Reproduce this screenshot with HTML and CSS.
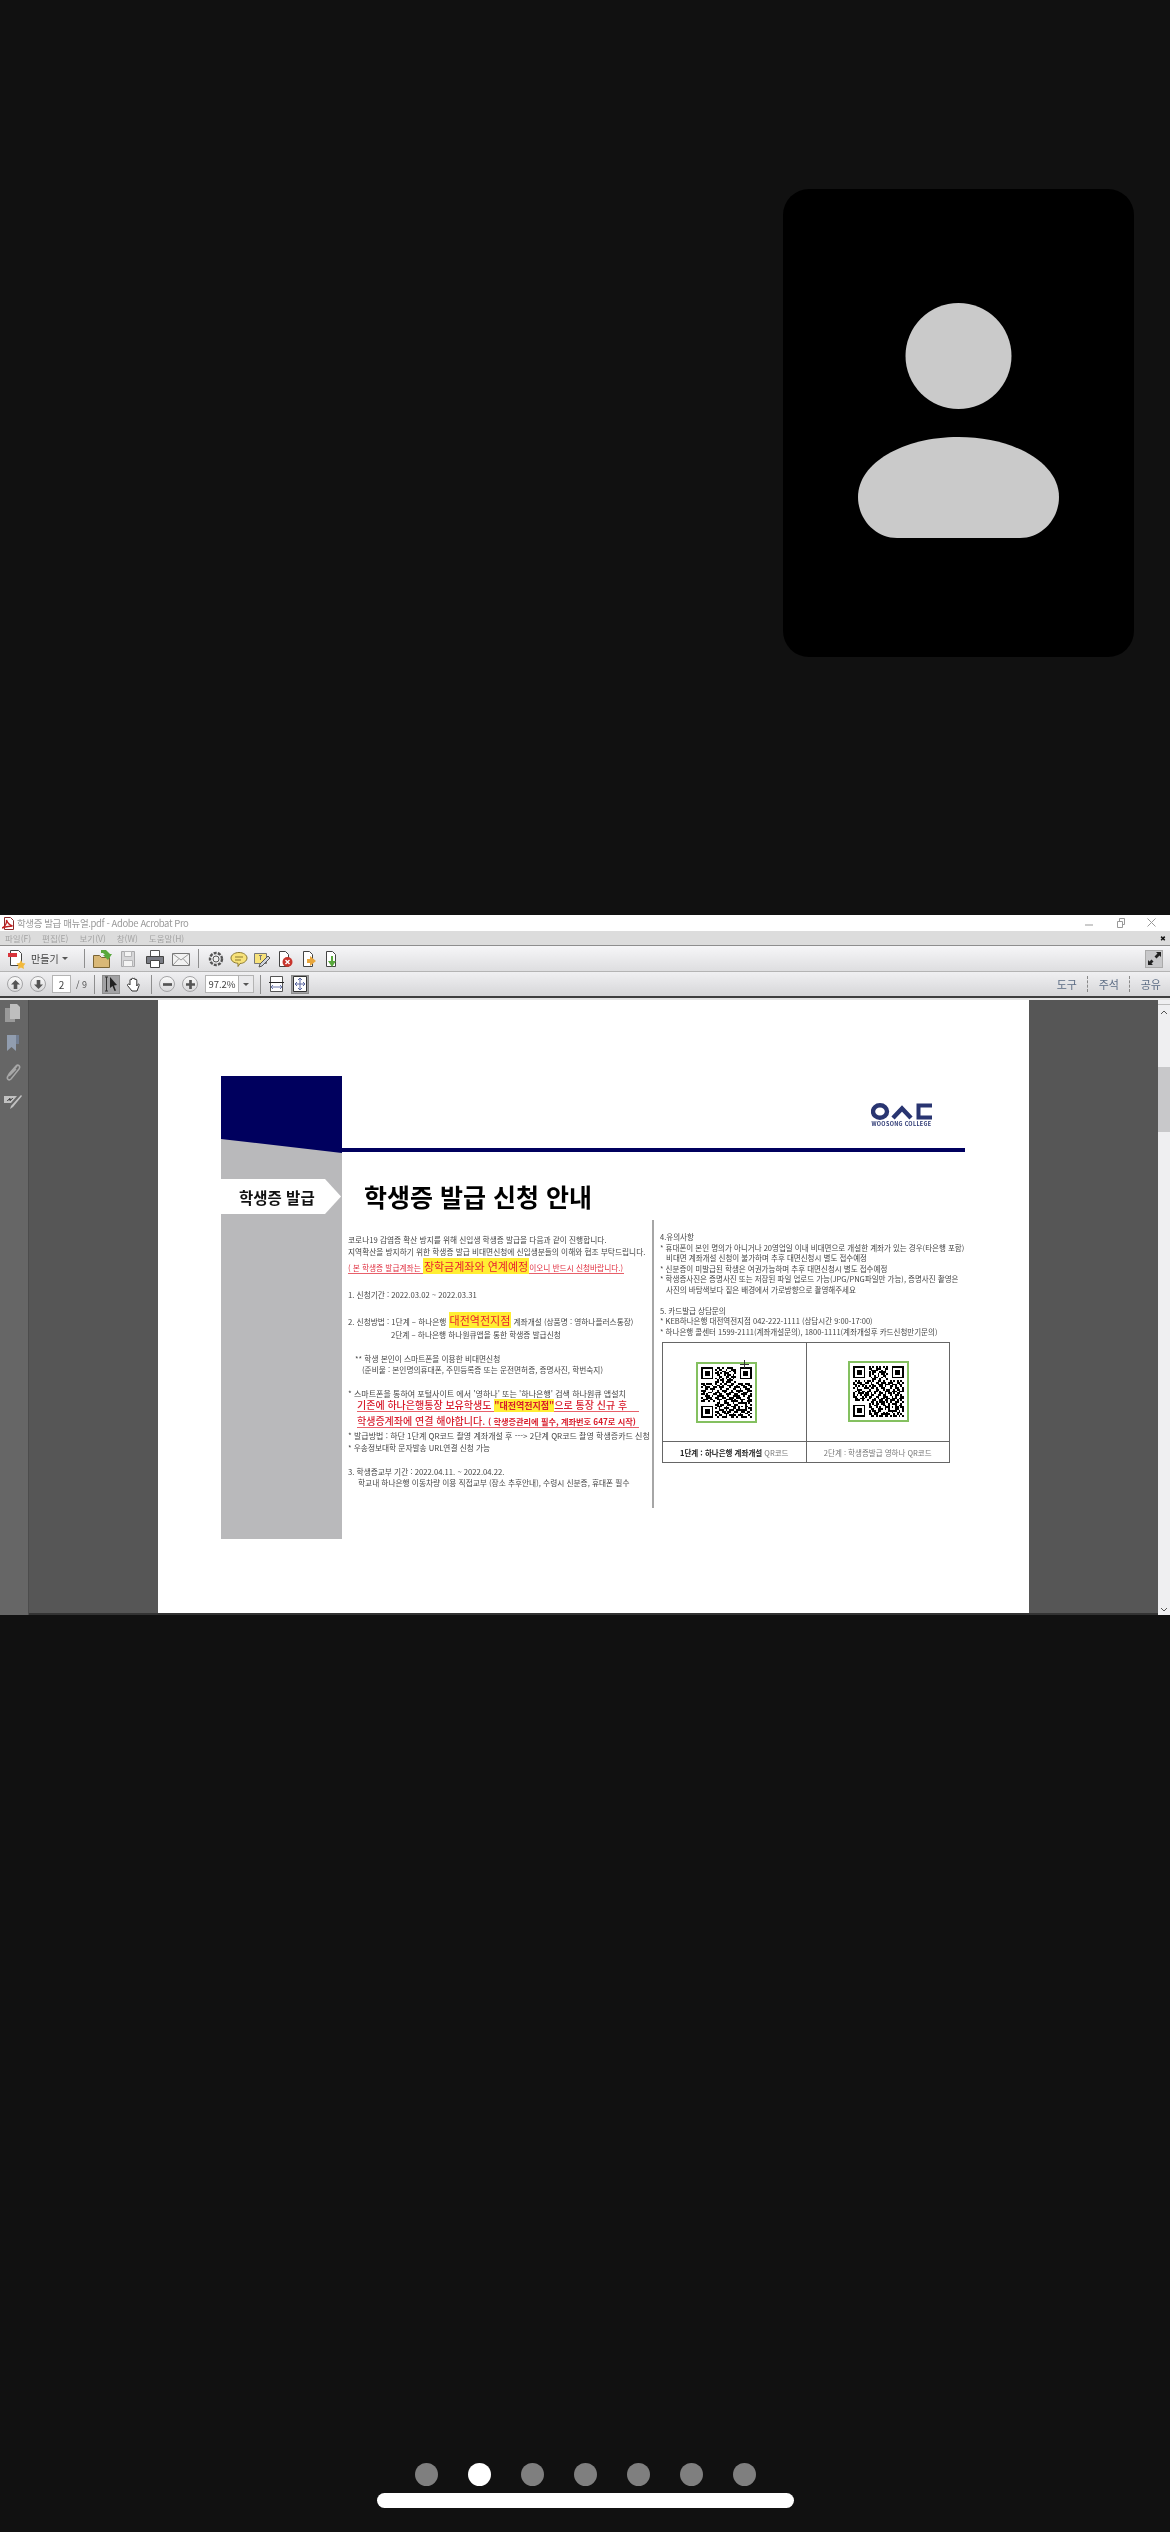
FILE: index.html
```html
<!DOCTYPE html>
<html lang="ko">
<head>
  <meta charset="UTF-8">
  <meta name="viewport" content="width=device-width, initial-scale=1.0">
  <title>학생증 발급 매뉴얼</title>
  <link rel="stylesheet" href="styles.css">
</head>
<body>
  <svg class="defs" width="0" height="0">
    <symbol id="qr-finders" viewBox="0 0 29 29">
      <path fill-rule="evenodd" d="M0 0h7v7H0zM1 1v5h5V1zM2 2h3v3H2zM22 0h7v7h-7zM23 1v5h5V1zM24 2h3v3h-3zM0 22h7v7H0zM1 23v5h5v-5zM2 24h3v3H2z"/>
    </symbol>
    <path id="qr-data" fill="none" stroke="#000" d="M9 .5h2M12 .5h1M15 .5h3M8 1.5h1M10 1.5h2M14 1.5h1M17 1.5h3M9 2.5h1M12 2.5h2M16 2.5h1M18 2.5h2M8 3.5h2M11 3.5h1M13 3.5h3M19 3.5h1M9 4.5h2M13 4.5h1M15 4.5h2M18 4.5h1M10 5.5h2M14 5.5h2M17 5.5h3M8 6.5h1M10 6.5h1M12 6.5h1M14 6.5h1M16 6.5h1M18 6.5h1M9 7.5h1M11 7.5h2M15 7.5h3M8 8.5h2M12 8.5h1M14 8.5h3M19 8.5h1M0 9.5h2M3 9.5h3M8 9.5h1M11 9.5h1M13 9.5h2M17 9.5h2M21 9.5h3M25 9.5h3M1 10.5h2M6 10.5h1M9 10.5h2M12 10.5h1M15 10.5h3M20 10.5h1M23 10.5h2M27 10.5h2M0 11.5h1M2 11.5h3M7 11.5h2M10 11.5h3M16 11.5h1M19 11.5h3M24 11.5h2M28 11.5h1M2 12.5h2M5 12.5h3M11 12.5h1M14 12.5h2M18 12.5h2M22 12.5h1M25 12.5h3M0 13.5h3M6 13.5h1M9 13.5h1M12 13.5h3M17 13.5h1M20 13.5h4M26 13.5h3M1 14.5h1M4 14.5h2M8 14.5h3M13 14.5h1M16 14.5h3M21 14.5h1M24 14.5h3M0 15.5h2M3 15.5h1M7 15.5h2M10 15.5h2M14 15.5h3M19 15.5h2M23 15.5h3M28 15.5h1M2 16.5h3M6 16.5h1M9 16.5h4M15 16.5h1M18 16.5h4M24 16.5h1M27 16.5h2M0 17.5h1M3 17.5h3M8 17.5h2M12 17.5h2M16 17.5h3M20 17.5h3M26 17.5h2M1 18.5h3M5 18.5h2M9 18.5h3M14 18.5h4M19 18.5h1M22 18.5h3M27 18.5h2M0 19.5h2M4 19.5h1M7 19.5h1M10 19.5h1M13 19.5h2M17 19.5h4M23 19.5h1M26 19.5h3M9 20.5h2M13 20.5h3M18 20.5h1M21 20.5h5M27 20.5h1M8 21.5h2M11 21.5h2M15 21.5h2M19 21.5h2M25 21.5h1M28 21.5h1M9 22.5h3M14 22.5h1M17 22.5h3M21 22.5h1M23 22.5h1M25 22.5h2M8 23.5h1M10 23.5h1M13 23.5h3M18 23.5h2M21 23.5h1M25 23.5h1M27 23.5h2M10 24.5h3M14 24.5h1M16 24.5h3M20 24.5h6M28 24.5h1M8 25.5h2M12 25.5h2M15 25.5h2M19 25.5h2M23 25.5h2M26 25.5h2M9 26.5h2M13 26.5h3M18 26.5h1M22 26.5h1M25 26.5h2M28 26.5h1M8 27.5h1M10 27.5h2M14 27.5h1M16 27.5h4M21 27.5h3M27 27.5h1M9 28.5h1M12 28.5h3M17 28.5h2M20 28.5h1M23 28.5h3M28 28.5h1"/>
  </svg>

  <section class="call-area">
    <div class="tile">
      <svg class="person" width="201" height="235" viewBox="0 0 201 235">
        <circle cx="100.5" cy="53" r="53"/>
        <path d="M39 235C17 235 0 216 0 194 0 160 45 134 100.5 134 156 134 201 160 201 194 201 216 184 235 162 235Z"/>
      </svg>
    </div>
  </section>

  <section class="window">
    <div class="titlebar">
      <svg class="app-icon" width="12" height="13" viewBox="0 0 12 13">
        <path fill="#fff" stroke="#8c2b2b" d="M2.5.5h6l3 3v9h-9z"/>
        <path fill="none" stroke="#c02020" stroke-width="1.4" d="M0 11c3-1 5-5 4.500-8 1 3 3 5 6 6-3 0-7 1-10.500 2z"/>
      </svg>
      <span class="title-text">학생증 발급 매뉴얼.pdf - Adobe Acrobat Pro</span>
      <div class="win-btns">
        <svg width="12" height="12" viewBox="0 0 12 12"><path d="M1 8h8"/></svg>
        <svg width="12" height="12" viewBox="0 0 12 12"><path d="M2.500 4.500h5v6h-5zM4.500 4.500v-3h5v6h-2"/></svg>
        <svg width="12" height="12" viewBox="0 0 12 12"><path d="M1.500 1.500l8 8M9.500 1.500l-8 8"/></svg>
      </div>
    </div>

    <div class="menubar">
      <span>파일(F)</span><span>편집(E)</span><span>보기(V)</span><span>창(W)</span><span>도움말(H)</span>
      <span class="menu-close">✖</span>
    </div>

    <div class="toolbar toolbar-top">
      <svg class="ic" width="18" height="20" viewBox="0 0 18 20">
        <path fill="#fff" stroke="#444" d="M2.500 1.500h8l3 3v12h-11z"/>
        <path fill="#d8343c" d="M0 4h9v4H0z"/>
        <path fill="#f2b93c" d="M13 11l1.500 3 3 .5-2 2.500.5 3-3-1.500-3 1.500.5-3-2-2.500 3-.5z"/>
      </svg>
      <span class="tool-label">만들기</span>
      <span class="caret"></span>
      <span class="sep sep-create"></span>
      <div class="tool-group">
        <svg class="ic" width="20" height="20" viewBox="0 0 20 20">
          <path fill="#d9b877" stroke="#7a6434" d="M1.500 6.500h6l2 2h8v10h-16z"/>
          <path fill="#59a83c" d="M9 1h5l4 4h2l-4 6-5-5h2l-2-2H9z"/>
        </svg>
        <svg class="ic" width="20" height="20" viewBox="0 0 20 20">
          <path fill="#d6d6d8" stroke="#a8a8aa" d="M3.500 2.500h13v15h-13z"/>
          <path fill="#f4f4f4" stroke="#b4b4b6" d="M6.500 2.500h7v5h-7zM5.500 11.500h9v6h-9z"/>
        </svg>
        <svg class="ic" width="20" height="20" viewBox="0 0 20 20">
          <path fill="#fff" stroke="#555" d="M5.500 1.500h9v6h-9z"/>
          <path fill="#7a7c84" stroke="#444" d="M1.500 7.500h17v7h-17z"/>
          <path fill="#fff" stroke="#444" d="M5.500 11.500h9v7h-9z"/>
        </svg>
        <svg class="ic" width="20" height="20" viewBox="0 0 20 20">
          <path fill="#f2f2f2" stroke="#777" d="M1.500 4.500h17v12h-17z"/>
          <path fill="none" stroke="#999" d="M1.500 4.500L10 11l8.500-6.500M1.500 16.500L8 9.500M18.500 16.500L12 9.500"/>
        </svg>
      </div>
      <span class="sep sep-tools"></span>
      <div class="tool-group tool-group-tight">
        <svg class="ic" width="18" height="18" viewBox="0 0 18 18">
          <circle cx="9" cy="9" r="6" fill="none" stroke="#555" stroke-width="2.400" stroke-dasharray="3 1.200"/>
          <circle cx="9" cy="9" r="3" fill="#eee" stroke="#555"/>
        </svg>
        <svg class="ic" width="18" height="18" viewBox="0 0 18 18">
          <path fill="#f7e27a" stroke="#8c7a30" d="M9 2.500c4.500 0 8 2.500 8 5.500s-3.500 5.500-7 5.500L8 16.500v-3.200C4 13 1 11 1 8c0-3 3.500-5.500 8-5.500z"/>
          <path stroke="#8c7a30" d="M5 7h8M5 10h6"/>
        </svg>
        <svg class="ic" width="18" height="18" viewBox="0 0 18 18">
          <path fill="#f7e27a" stroke="#777" d="M1.500 3.500h12v10h-12z"/>
          <path fill="#777" d="M6 5h3v1H8v4H7V6H6z"/>
          <path fill="#cfd3dc" stroke="#555" d="M15 6l2 2-8 8-3 1 1-3z"/>
        </svg>
        <svg class="ic" width="18" height="18" viewBox="0 0 18 18">
          <path fill="#fff" stroke="#444" d="M3.500 1.500h6l3 3v12h-9z"/>
          <circle cx="11.500" cy="12" r="5" fill="#c8342c"/>
          <path stroke="#fff" stroke-width="1.400" d="M9.500 10l4 4M13.500 10l-4 4"/>
        </svg>
        <svg class="ic" width="18" height="18" viewBox="0 0 18 18">
          <path fill="#fff" stroke="#444" d="M3.500 1.500h6l3 3v12h-9z"/>
          <path fill="#e8a63c" d="M10 6l6 5-6 5v-3H7V9h3z"/>
        </svg>
        <svg class="ic" width="18" height="18" viewBox="0 0 18 18">
          <path fill="#fff" stroke="#444" d="M3.500 1.500h6l3 3v12h-9z"/>
          <path fill="#58a83c" d="M10 6v5h3l-4 6-4-6h3V6z"/>
        </svg>
      </div>
      <div class="expand">
        <svg width="15" height="15" viewBox="0 0 15 15">
          <path fill="#222" d="M9 1h5v5l-1.500-1.500-3 3-2-2 3-3zM1 9l1.500 1.500 2-2 2 2-2 2L6 14H1z"/>
        </svg>
      </div>
    </div>

    <div class="toolbar toolbar-nav">
      <span class="round"><svg width="10" height="10" viewBox="0 0 10 10"><path d="M5 0l5 5H7v5H3V5H0z"/></svg></span>
      <span class="round"><svg width="10" height="10" viewBox="0 0 10 10"><path d="M5 10L0 5h3V0h4v5h3z"/></svg></span>
      <span class="field page-field">2</span>
      <span class="page-count">/ 9</span>
      <span class="sep"></span>
      <span class="toggle on">
        <svg width="14" height="16" viewBox="0 0 14 16"><path fill="none" stroke="#333" d="M1 1h3M1 15h3M2.500 1v14"/><path fill="#222" d="M6 1l7 8-3 .5 2 5-1.500.5-2-5L6 12z"/></svg>
      </span>
      <svg class="hand" width="16" height="16" viewBox="0 0 16 16">
        <path fill="#fff" stroke="#333" d="M4 9V4c0-1 1.500-1 1.500 0V3c0-1 1.800-1 1.800 0v0c0-1 1.800-1 1.800 0v1c0-1 1.700-1 1.700 0v6l1-1.500c.8-1 2 0 1.300 1L11 15H6L1.500 9.500C1 8 3 7.500 4 9z"/>
      </svg>
      <span class="sep sep-hand"></span>
      <span class="round"><svg width="10" height="10" viewBox="0 0 10 10"><path d="M0 3.500h10v3H0z"/></svg></span>
      <span class="round"><svg width="10" height="10" viewBox="0 0 10 10"><path d="M3.500 0h3v3.500H10v3H6.500V10h-3V6.500H0v-3h3.500z"/></svg></span>
      <span class="zoom-combo"><span class="field zoom-field">97.2%</span><span class="zoom-arrow"><span class="caret"></span></span></span>
      <span class="sep"></span>
      <svg class="fit" width="18" height="18" viewBox="0 0 18 18">
        <path fill="#fff" stroke="#555" d="M2.500 1.500h12v15h-12z"/>
        <path stroke="#222" d="M1 7.500h15"/>
        <path fill="none" stroke="#6a76a8" d="M3 12h11M12 10l2 2-2 2M5 10l-2 2 2 2"/>
      </svg>
      <span class="toggle toggle-fit on">
        <svg width="14" height="16" viewBox="0 0 14 16"><path fill="#fff" stroke="#333" d="M.5.500h13v15H.5z"/><path fill="none" stroke="#5a66a0" d="M7 2v12M5 4l2-2 2 2M5 12l2 2 2-2M2 8h10M4 6L2 8l2 2M10 6l2 2-2 2"/></svg>
      </span>
      <div class="panes">
        <span>도구</span><span>주석</span><span>공유</span>
      </div>
    </div>

    <div class="viewer">
      <nav class="rail">
        <svg width="20" height="20" viewBox="0 0 20 20">
          <path fill="#a8a8a8" d="M2 5h10v14H2z"/><path fill="#d4d4d4" d="M7 1h7l3 3v12H7z"/>
        </svg>
        <svg width="20" height="20" viewBox="0 0 20 20">
          <path fill="#9cabc2" d="M4 2h9v16l-4.500-4L4 18z"/><path fill="#75859e" d="M13 2h3v9h-3z"/>
        </svg>
        <svg width="20" height="20" viewBox="0 0 20 20">
          <path fill="none" stroke="#b8b8b8" stroke-width="1.500" d="M14 4L5 14c-2 3 1 5 3 3L16 7c2-3-1-5-3-3L6 12c-1 1 0 2 1 1l6-6"/>
        </svg>
        <svg width="20" height="20" viewBox="0 0 20 20">
          <path fill="#d8d8d8" d="M1 4h13l-6 7H1zM18 3l1 1-9 11-3 2 1-3z"/><path stroke="#555" d="M4 9l3-3 0 3 3-3"/>
        </svg>
      </nav>

      <main class="gutter">
        <article class="page">
          <aside class="band">
            <svg class="band-top" width="121" height="77" viewBox="0 0 121 77">
              <path fill="#00005e" d="M0 0h121v77L0 63z"/>
            </svg>
            <div class="tag">학생증 발급</div>
          </aside>

          <div class="sheet">
            <header class="sheet-head">
              <div class="logo">
                <svg width="61" height="17" viewBox="0 0 61 17">
                  <ellipse cx="9" cy="8.500" rx="7" ry="6.300" fill="none" stroke="#293571" stroke-width="4.400"/>
                  <path fill="none" stroke="#293571" stroke-width="4.400" d="M22 15l9-9.500 9 9.500"/>
                  <path fill="none" stroke="#293571" stroke-width="4" d="M61 2.500H47.500v12H61"/>
                </svg>
                <span class="logo-text">WOOSONG COLLEGE</span>
              </div>
            </header>
            <h1 class="doc-title">학생증 발급 신청 안내</h1>

            <div class="columns">
              <div class="col-left">
                <p class="ln">코로나19 감염증 확산 방지를 위해 신입생 학생증 발급을 다음과 같이 진행합니다.</p>
                <p class="ln g1">지역확산을 방지하기 위한 학생증 발급 비대면신청에 신입생분들의 이해와 협조 부탁드립니다.</p>
                <p class="ln-notice g3">( 본 학생증 발급계좌는 <mark class="hl-big">장학금계좌와 연계예정</mark>이오니 반드시 신청바랍니다.)</p>
                <p class="ln g15">1. 신청기간 : 2022.03.02 ~ 2022.03.31</p>
                <p class="ln-method g13">2. 신청방법 : 1단계 – 하나은행 <mark class="hl-branch">대전역전지점</mark> 계좌개설 (상품명 : 영하나플러스통장)</p>
                <p class="ln g1 step-two">2단계 – 하나은행 하나원큐앱을 통한 학생증 발급신청</p>
                <p class="ln g13 indent-a">** 학생 본인이 스마트폰을 이용한 비대면신청</p>
                <p class="ln indent-b">(준비물 : 본인명의휴대폰, 주민등록증 또는 운전면허증, 증명사진, 학번숙지)</p>
                <p class="ln ln-wide g13">* 스마트폰을 통하여 포털사이트 에서 '영하나' 또는 '하나은행' 검색 하나원큐 앱설치</p>
                <p class="ln-red">기존에 하나은행통장 보유학생도 <mark class="hl-red">"대전역전지점"</mark>으로 통장 신규 후</p>
                <p class="ln-red g3">학생증계좌에 연결 해야합니다. <small class="red-small">( 학생증관리에 필수, 계좌번호 647로 시작)</small></p>
                <p class="ln ln-wide g2">* 발급방법 : 하단 1단계 QR코드 촬영 계좌개설 후 ---&gt; 2단계 QR코드 촬영 학생증카드 신청</p>
                <p class="ln g1">* 우송정보대학 문자발송 URL연결 신청 가능</p>
                <p class="ln g13">3. 학생증교부 기간 : 2022.04.11. ~ 2022.04.22.</p>
                <p class="ln indent-c">학교내 하나은행 이동차량 이용 직접교부 (장소 추후안내), 수령시 신분증, 휴대폰 필수</p>
              </div>

              <div class="col-right">
                <p class="rn">4.유의사항</p>
                <p class="rn">* 휴대폰이 본인 명의가 아니거나 20영업일 이내 비대면으로 개설한 계좌가 있는 경우(타은행 포함)</p>
                <p class="rn rn-sub">비대면 계좌개설 신청이 불가하며 추후 대면신청시 별도 접수예정</p>
                <p class="rn">* 신분증이 미발급된 학생은 여권가능하며 추후 대면신청시 별도 접수예정</p>
                <p class="rn">* 학생증사진은 증명사진 또는 저장된 파일 업로드 가능(JPG/PNG파일만 가능), 증명사진 촬영은</p>
                <p class="rn rn-sub">사진의 바탕색보다 짙은 배경에서 가로방향으로 촬영해주세요</p>
                <p class="rn rn-gap">5. 카드발급 상담문의</p>
                <p class="rn">* KEB하나은행 대전역전지점 042-222-1111 (상담시간 9:00-17:00)</p>
                <p class="rn">* 하나은행 콜센터 1599-2111(계좌개설문의), 1800-1111(계좌개설후 카드신청만기문의)</p>

                <table class="qr-table">
                  <tr class="qr-row">
                    <td class="qr-cell-a">
                      <span class="qr">
                        <svg width="51" height="51" viewBox="0 0 29 29"><use href="#qr-finders"/><use href="#qr-data"/></svg>
                        <span class="qr-cursor"></span>
                      </span>
                    </td>
                    <td class="qr-cell-b">
                      <span class="qr">
                        <svg width="51" height="51" viewBox="0 0 29 29"><use href="#qr-finders"/><use href="#qr-data" transform="matrix(0 1 1 0 0 0)"/></svg>
                      </span>
                    </td>
                  </tr>
                  <tr class="cap-row">
                    <td><b>1단계 : 하나은행 계좌개설</b> <span class="cap-light">QR코드</span></td>
                    <td class="cap-light">2단계 : 학생증발급 영하나 QR코드</td>
                  </tr>
                </table>
              </div>
            </div>
          </div>
        </article>
      </main>

      <div class="scrollbar">
        <span class="scroll-cap"></span>
        <svg class="scroll-arrow" width="8" height="5" viewBox="0 0 8 5"><path d="M1 4l3-3 3 3"/></svg>
        <span class="thumb"></span>
        <svg class="scroll-arrow scroll-down" width="8" height="5" viewBox="0 0 8 5"><path d="M1 1l3 3 3-3"/></svg>
      </div>
    </div>
  </section>

  <footer class="pager">
    <div class="dots">
      <span class="dot"></span>
      <span class="dot active"></span>
      <span class="dot"></span>
      <span class="dot"></span>
      <span class="dot"></span>
      <span class="dot"></span>
      <span class="dot"></span>
    </div>
    <div class="home-bar"></div>
  </footer>
</body>
</html>
```

FILE: styles.css
```css
* { box-sizing: border-box; }
body { margin: 0; width: 1170px; height: 2532px; overflow: hidden; background: #111; font-family: "Noto Sans CJK KR", "Noto Sans", sans-serif; }
p, h1 { margin: 0; }
mark { color: inherit; }
.defs { position: absolute; }

/* call tile */
.call-area { height: 915px; padding: 189px 36px 0 0; display: flex; justify-content: flex-end; }
.tile { width: 351px; height: 468px; background: #000; border-radius: 26px; padding-top: 114px; display: flex; justify-content: center; }
.person { fill: #cacaca; }

/* acrobat window */
.window { height: 700px; background: #fff; display: flex; flex-direction: column; filter: blur(0.55px); }
.titlebar { height: 16px; display: flex; align-items: center; padding-left: 2px; background: #fff; }
.title-text { margin-left: 3px; font-size: 9.500px; letter-spacing: -0.400px; color: #9a9a9a; }
.win-btns { margin-left: auto; display: flex; gap: 19px; padding-right: 12px; }
.win-btns svg { fill: none; stroke: #999; }
.menubar { height: 14px; background: #dcdcdc; display: flex; align-items: center; gap: 11px; padding-left: 5px; font-size: 8.500px; color: #a4a4a4; }
.menu-close { margin-left: auto; padding-right: 4px; font-size: 7px; color: #111; }

.toolbar { display: flex; align-items: center; border-top: 1px solid #8e8e8e; }
.toolbar-top { height: 26px; padding: 0 7px 0 8px; background: linear-gradient(#f6f6f8, #dedee0); }
.toolbar-nav { height: 27px; padding: 0 9px 0 7px; background: linear-gradient(#f0f0f2, #d6d6d8); border-top-color: #b4b4b4; border-bottom: 2px solid #3e3e3e; }
.tool-label { margin-left: 5px; width: 26px; font-size: 10px; color: #444; white-space: nowrap; }
.caret { display: inline-block; margin-left: 5px; border: 3px solid transparent; border-top: 3px solid #555; border-bottom: 0; }
.sep { width: 1px; height: 19px; margin: 0 7px 0 6px; background: #8e8e8e; flex: none; }
.sep-create { margin: 0 7px 0 16px; }
.sep-tools { margin: 0 8px 0 7px; }
.sep-hand { margin: 0 7px 0 9px; }
.tool-group { display: flex; gap: 6.300px; }
.tool-group-tight { gap: 5.200px; }
.expand { margin-left: auto; width: 18px; height: 18px; background: #c8c8ca; border: 1px solid #aaa; display: flex; align-items: center; justify-content: center; }

.round { width: 16px; height: 16px; margin-right: 7px; border-radius: 50%; border: 1px solid #a4a4a6; background: linear-gradient(#fafafa, #d8d8da); display: flex; align-items: center; justify-content: center; flex: none; }
.round svg { width: 9px; height: 9px; fill: #555; }
.field { background: #fff; border: 1px solid #b4b4b4; font-size: 10px; color: #444; display: flex; align-items: center; justify-content: center; }
.page-field { width: 19px; height: 18px; margin-left: -1px; }
.page-count { margin-left: 5px; width: 12px; font-size: 9px; color: #555; white-space: nowrap; }
.toggle { width: 18px; height: 19px; background: #a2a2a4; border: 1px solid #8c8c8c; display: flex; align-items: center; justify-content: center; flex: none; }
.hand { margin-left: 6px; }
.zoom-combo { display: flex; height: 18px; width: 49px; flex: none; }
.zoom-field { width: 34px; height: 18px; font-size: 9.500px; }
.zoom-arrow { width: 15px; height: 18px; border: 1px solid #b4b4b4; border-left: 0; background: #eaeaec; display: flex; align-items: center; justify-content: center; }
.zoom-arrow .caret { margin-left: 0; }
.fit { flex: none; }
.toggle-fit { margin-left: 5px; }
.panes { margin-left: auto; display: flex; font-size: 11px; color: #5c6c84; }
.panes span { width: 42px; display: flex; justify-content: flex-end; padding-right: 10px; border-right: 1px dashed #888; }
.panes span:last-child { border-right: 0; padding-right: 0; width: 31px; }

/* viewer */
.viewer { flex: 1; min-height: 0; display: flex; border-top: 2px solid #e4e4e4; }
.rail { width: 29px; background: #666; border-right: 1px solid #4c4c4c; display: flex; flex-direction: column; align-items: center; gap: 9.500px; padding: 3px 3px 0 0; flex: none; }
.rail svg { opacity: 0.8; }
.gutter { flex: 1; background: #565656; padding-left: 129px; min-width: 0; border-bottom: 2px solid #333; }
.page { width: 871px; height: 613px; background: #fff; padding: 76px 0 0 63px; display: flex; }

/* document page */
.band { width: 121px; height: 463px; background: #b9b9bb; flex: none; }
.band-top { display: block; }
.tag { margin-top: 26px; width: 120px; height: 35px; background: #fff; color: #111; font-size: 15.500px; font-weight: 700; display: flex; align-items: center; padding-left: 18px; clip-path: polygon(0 0, 104px 0, 100% 50%, 104px 100%, 0 100%); }
.sheet { width: 623px; }
.sheet-head { height: 76px; border-bottom: 4px solid #00005e; display: flex; justify-content: flex-end; padding: 27px 33px 0 0; }
.logo { width: 61px; height: 30px; display: flex; flex-direction: column; align-items: center; }
.logo svg { display: block; }
.logo-text { font-size: 5.500px; line-height: 8px; font-weight: 700; letter-spacing: 0.300px; color: #293571; white-space: nowrap; }
.doc-title { margin-left: 22px; height: 68px; padding-top: 24px; font-size: 25px; line-height: 40px; font-weight: 700; color: #000; white-space: nowrap; }

.columns { display: flex; }
.col-left { width: 306px; height: 288px; margin-left: 6px; padding-top: 14px; border-right: 2px solid #a6a6a6; font-size: 7.700px; color: #444; white-space: nowrap; }
.col-right { padding: 12px 0 0 6px; font-size: 7.500px; color: #444; white-space: nowrap; }

.ln { height: 11px; line-height: 11px; }
.ln-wide { font-size: 8px; }
.g1 { margin-top: 1px; }
.g2 { margin-top: 2px; }
.g3 { margin-top: 3px; }
.g13 { margin-top: 13px; }
.g15 { margin-top: 15px; }
.step-two { padding-left: 43px; }
.indent-a { padding-left: 7px; }
.indent-b { padding-left: 14px; }
.indent-c { padding-left: 10px; }

.ln-notice { width: 276px; height: 14px; line-height: 13px; color: #e03040; border-bottom: 1px solid #e8606a; }
.hl-big { background: #ffee33; font-size: 11px; color: #e82030; padding: 0 1px; }
.ln-method { height: 15px; line-height: 15px; }
.hl-branch { background: #ffee33; font-size: 11px; color: #e82030; padding: 0 1px; }
.ln-red { width: 282px; height: 13px; line-height: 12px; margin-left: 9px; font-size: 10px; font-weight: 500; color: #d81c2c; border-bottom: 1px solid #e8606a; }
.hl-red { background: #ffee33; color: #d81c2c; font-weight: 700; font-size: 9px; }
.red-small { font-size: 8.200px; font-weight: 700; }

.rn { height: 10.600px; line-height: 10.600px; }
.rn-sub { padding-left: 6px; }
.rn-gap { margin-top: 10px; }

.qr-table { margin: 5px 0 0 2px; width: 288px; height: 121px; border-collapse: collapse; table-layout: fixed; border: 1px solid #666; font-size: 7.500px; }
.qr-table td { padding: 0; border: 1px solid #666; }
.qr-row { height: 99px; vertical-align: top; }
.qr-cell-a { padding: 19px 0 0 33px !important; }
.qr-cell-b { padding: 18px 0 0 41px !important; }
.qr { position: relative; display: block; width: 61px; height: 61px; padding: 3px; border: 2px solid #84c060; background: #fff; }
.qr svg { display: block; shape-rendering: crispEdges; }
.qr-cursor { position: absolute; top: -4px; right: 6px; width: 9px; height: 8px; background: linear-gradient(#333, #333) center / 100% 1px no-repeat, linear-gradient(#333, #333) center / 1px 100% no-repeat; }
.cap-row { height: 21px; text-align: center; color: #222; }
.cap-light { color: #777; }

/* scrollbar */
.scrollbar { width: 12px; background: #efeff1; display: flex; flex-direction: column; align-items: center; flex: none; }
.scroll-cap { height: 5px; width: 100%; border-bottom: 1px solid #bbb; }
.scroll-arrow { margin-top: 5px; fill: none; stroke: #555; flex: none; }
.thumb { margin-top: 52px; width: 100%; height: 65px; background: #c8c8ca; }
.scroll-down { margin-top: auto; margin-bottom: 3px; }

/* page dots */
.pager { padding-top: 848px; display: flex; flex-direction: column; align-items: center; }
.dots { display: flex; gap: 30px; margin-left: 1px; }
.dot { width: 23px; height: 23px; border-radius: 50%; background: #7f7f7f; }
.dot.active { background: #fff; }
.home-bar { margin-top: 7px; width: 417px; height: 15px; border-radius: 8px; background: #fff; margin-left: 1px; }
```
